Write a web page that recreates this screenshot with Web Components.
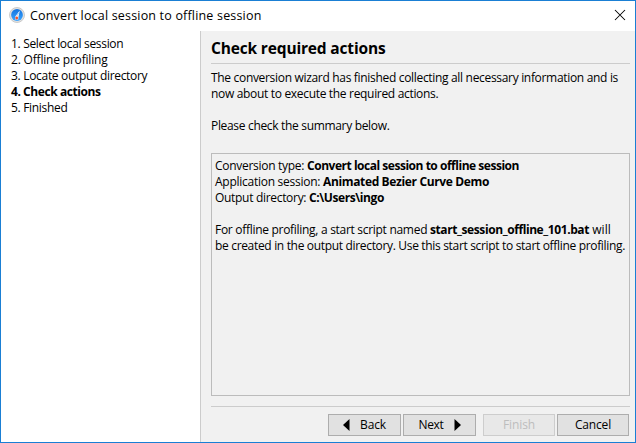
<!DOCTYPE html>
<html lang="en"><head><meta charset="utf-8"><title>Convert local session to offline session</title>
<style>
html,body{margin:0;height:100%;overflow:hidden}
body{font:12px/16px "Open Sans","Noto Sans",sans-serif;color:#000}
</style></head><body>
<wizard-dialog></wizard-dialog>
<script>
// A run of text spaced evenly to fill the width in its "w" attribute.
class FitText extends HTMLElement{
  connectedCallback(){
    const r=this.attachShadow({mode:'open'});
    r.innerHTML='<style>:host{display:inline-block;white-space:pre;vertical-align:top;width:var(--w)}:host([b]){font-weight:700}span{display:inline-block;font-variant-ligatures:none}</style><span><slot></slot></span>';
    const s=r.querySelector('span'),w=+this.getAttribute('w');
    this.style.setProperty('--w',w+'px');
    const n=this.textContent.length;
    s.style.letterSpacing=((w-s.getBoundingClientRect().width)/n)+'px';
  }
}
class AppIcon extends HTMLElement{
  connectedCallback(){
    this.attachShadow({mode:'open'}).innerHTML=`<style>:host{display:block;width:16px;height:16px}svg{display:block}</style>
    <svg width="16" height="16" viewBox="0 0 16 16"><defs><linearGradient id="g" x2="0" y2="1"><stop stop-color="#1473df"/><stop offset="1" stop-color="#3ba5ff"/></linearGradient></defs>
    <circle cx="8" cy="8" r="7.5" fill="#e2e2e2" stroke="#c2c2c2" stroke-width=".8"/><circle cx="8" cy="8" r="5.9" fill="url(#g)"/>
    <path d="M10.8 3.6 6.3 9.4 6.2 12.6 9.3 12.6 9.5 9.4Z" fill="#fff"/><path d="M9.6 6 8 8.8" stroke="#6fb3f5" stroke-width=".7"/><circle cx="7.7" cy="11" r="1.4" fill="#f0522d"/></svg>`;
  }
}
class TitleBar extends HTMLElement{
  connectedCallback(){
    this.attachShadow({mode:'open'}).innerHTML=`<style>:host{display:flex;height:30px;box-sizing:border-box;background:#fff;padding:0 9px 0 8px;align-items:center}
    app-icon{margin:-2px 5px 0 0}.t{flex:1;height:16px}svg{display:block;margin-top:-2px}</style>
    <app-icon></app-icon><div class="t"><slot></slot></div>
    <svg width="12" height="12" viewBox="0 0 12 12"><path d="m1 1 10 10M11 1 1 11" stroke="#000" stroke-width="1.05" fill="none"/></svg>`;
  }
}
class StepList extends HTMLElement{
  connectedCallback(){
    this.attachShadow({mode:'open'}).innerHTML='<style>:host{display:flex;flex-direction:column;box-sizing:border-box;width:200px;background:#fff;border-right:1px solid #ccc;padding:5px 0 0 10px}</style><slot></slot>';
  }
}
class SummaryBox extends HTMLElement{
  connectedCallback(){
    this.attachShadow({mode:'open'}).innerHTML='<style>:host{display:block;box-sizing:border-box;height:243px;border:1px solid #bcbcbc;padding:4px 0 0 3px;white-space:nowrap}</style><slot></slot>';
  }
}
class WizardButton extends HTMLElement{
  connectedCallback(){
    const a=this.getAttribute('arrow');
    const svg=a?`<svg width="7" height="12" viewBox="0 0 7 12"><path d="${a==='left'?'M6.5 0v12L0 6Z':'M.5 0v12L7 6Z'}"/></svg>`:'';
    this.attachShadow({mode:'open'}).innerHTML=`<style>:host{display:flex;box-sizing:border-box;width:var(--bw,72px);height:22px;border:1px solid #adadad;background:#e1e1e1;align-items:center;justify-content:center;gap:10px}
    :host([disabled]){border-color:#cdcdcd;background:#e8e8e8;color:#bdbdbd}svg{display:block;margin-top:-1px}</style>
    ${a==='left'?svg:''}<slot></slot>${a==='right'?svg:''}`;
  }
}
class WizardDialog extends HTMLElement{
  connectedCallback(){
    this.attachShadow({mode:'open'}).innerHTML=`<style>
    :host{display:flex;flex-direction:column;box-sizing:border-box;width:636px;height:443px;border:1px solid #1a7fd4;background:#f1f1f1}
    .body{flex:1;display:flex}
    main{flex:1;padding:0 5px 0 10px;display:flex;flex-direction:column}
    h1{margin:0;height:32px;box-sizing:border-box;padding-top:7px;font-size:15.5px;line-height:20px}
    hr{margin:0;border:0;height:1px;background:#ccc}
    .intro{box-sizing:border-box;height:89px;padding-top:6px}
    .gap{height:16px}
    .line{white-space:nowrap;display:flex;height:16px}
    footer{display:flex;justify-content:flex-end;gap:2px;padding:7px 1px 0 0}
    hr.bottom{margin-top:10px}
    .wide{--bw:73px}.finish{margin-left:5px}
    .caption{font-size:12.5px}
    </style>
    <title-bar><fit-text class="caption" w="231.5">Convert local session to offline session</fit-text></title-bar>
    <div class="body">
    <step-list><fit-text w="112.3">1. Select local session</fit-text><fit-text w="96.5">2. Offline profiling</fit-text><fit-text w="136.3">3. Locate output directory</fit-text><fit-text b w="89.5">4. Check actions</fit-text><fit-text w="56.5">5. Finished</fit-text></step-list>
    <main><h1><fit-text b w="174.5">Check required actions</fit-text></h1><hr>
    <div class="intro"><div class="line"><fit-text w="407">The conversion wizard has finished collecting all necessary information and is</fit-text></div>
    <div class="line"><fit-text w="227.3">now about to execute the required actions.</fit-text></div><div class="gap"></div>
    <div class="line"><fit-text w="178.5">Please check the summary below.</fit-text></div></div>
    <summary-box>
    <div class="line"><fit-text w="92">Conversion type: </fit-text><fit-text b w="212">Convert local session to offline session</fit-text></div>
    <div class="line"><fit-text w="108">Application session: </fit-text><fit-text b w="166">Animated Bezier Curve Demo</fit-text></div>
    <div class="line"><fit-text w="94">Output directory: </fit-text><fit-text b w="75">C:\\Users\\ingo</fit-text></div><div class="gap"></div>
    <div class="line"><fit-text w="215">For offline profiling, a start script named </fit-text><fit-text b w="159">start_session_offline_101.bat</fit-text><fit-text w="22"> will</fit-text></div>
    <div class="line"><fit-text w="410">be created in the output directory. Use this start script to start offline profiling.</fit-text></div>
    </summary-box><hr class="bottom">
    <footer><wizard-button class="wide" arrow="left"><fit-text w="26">Back</fit-text></wizard-button><wizard-button class="wide" arrow="right"><fit-text w="25">Next</fit-text></wizard-button><wizard-button class="finish" disabled><fit-text w="32">Finish</fit-text></wizard-button><wizard-button><fit-text w="36">Cancel</fit-text></wizard-button></footer>
    </main></div>`;
  }
}
customElements.define('fit-text',FitText);
customElements.define('app-icon',AppIcon);
customElements.define('title-bar',TitleBar);
customElements.define('step-list',StepList);
customElements.define('summary-box',SummaryBox);
customElements.define('wizard-button',WizardButton);
customElements.define('wizard-dialog',WizardDialog);
</script></body></html>
